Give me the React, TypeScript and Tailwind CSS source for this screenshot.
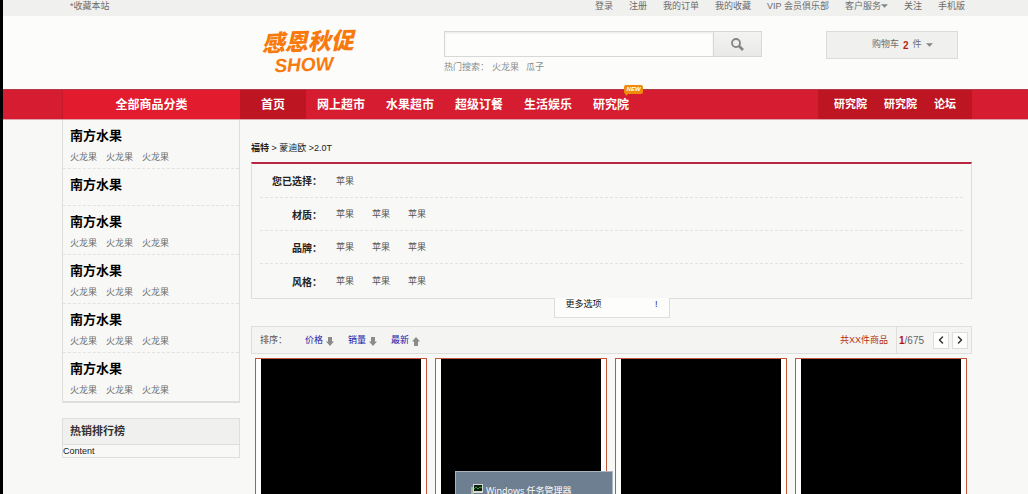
import { ChevronLeft, ChevronRight } from "lucide-react";
import clsx from "clsx";

const accountLinks = [
  { label: "登录" },
  { label: "注册" },
  { label: "我的订单" },
  { label: "我的收藏" },
  { label: "VIP 会员俱乐部" },
  { label: "客户服务", caret: true },
  { label: "关注" },
  { label: "手机版" },
];

const navigation = [
  { label: "网上超市" },
  { label: "水果超市" },
  { label: "超级订餐" },
  { label: "生活娱乐" },
  { label: "研究院", isNew: true },
];

const sideNavigation = ["研究院", "研究院", "论坛"];

const fruits = ["火龙果", "火龙果", "火龙果"];

const categories = [
  { title: "南方水果", items: fruits },
  { title: "南方水果", items: [] },
  { title: "南方水果", items: fruits },
  { title: "南方水果", items: fruits },
  { title: "南方水果", items: fruits },
  { title: "南方水果", items: fruits },
];

const filters = [
  { label: "您已选择：", options: ["苹果"] },
  { label: "材质：", options: ["苹果", "苹果", "苹果"] },
  { label: "品牌：", options: ["苹果", "苹果", "苹果"] },
  { label: "风格：", options: ["苹果", "苹果", "苹果"] },
];

const sortOptions = [
  { label: "价格", up: false },
  { label: "销量", up: false },
  { label: "最新", up: true },
];

const products = [1, 2, 3, 4];

// shared page column
const column = "mx-auto w-full max-w-[913px] pl-[3px]";

function Caret() {
  return (
    <svg viewBox="0 0 8 4" className="h-[4px] w-[7px]" fill="#858583">
      <path d="M0 0h8L4 4z" />
    </svg>
  );
}

function SearchIcon() {
  return (
    <svg viewBox="0 0 13 13" className="h-[13px] w-[13px]" fill="none" stroke="#858583">
      <circle cx="5" cy="5" r="4" strokeWidth="1.8" />
      <path d="M8 8l4 4" strokeWidth="2.6" />
    </svg>
  );
}

function SortArrow({ up }: { up: boolean }) {
  return (
    <svg viewBox="0 0 8 9" className={clsx("h-[9px] w-[8px]", up && "rotate-180")} fill="#8b8b89">
      <path d="M2 0h4v4.5h2L4 9 0 4.5h2z" />
    </svg>
  );
}

function TopBar() {
  return (
    <div className="h-[16px] overflow-hidden bg-[#f0f0ee] text-[#6c6c6a]">
      <div className={clsx(column, "flex justify-between leading-3")}>
        <a href="#" className="ml-2">*收藏本站</a>
        <nav className="mr-[7px] flex gap-4">
          {accountLinks.map((link) => (
            <a key={link.label} href="#" className="flex items-center">
              {link.label}
              {link.caret && <Caret />}
            </a>
          ))}
        </nav>
      </div>
    </div>
  );
}

function Header() {
  return (
    <header className="h-[73px] bg-[#fcfcfa]">
      <div className={clsx(column, "flex items-start pt-[15px]")}>
        <a
          href="#"
          className="ml-[200px] -mt-[2px] w-[94px] -rotate-2 whitespace-nowrap font-black italic text-[#f87a0c]"
        >
          <span className="block text-[23px] leading-[26px]">感恩秋促</span>
          <span className="block pl-3 text-[19px] leading-[20px]">SHOW</span>
        </a>

        <div className="ml-[88px] w-[318px]">
          <form className="flex h-[26px]">
            <input
              type="text"
              aria-label="搜索"
              className="min-w-0 flex-1 border border-[#d8d8d6] bg-[#fdfdfb] px-2 shadow-[inset_0_1px_2px_#e8e8e6] outline-none"
            />
            <button
              type="button"
              aria-label="搜索"
              className="flex w-[48px] items-center justify-center border border-l-0 border-[#d8d8d6] bg-linear-to-b from-[#f3f3f1] to-[#e9e9e7]"
            >
              <SearchIcon />
            </button>
          </form>
          <p className="mt-[4px] flex gap-[7px] leading-3 text-[#8c8c8a]">
            <span className="-mr-[4px]">热门搜索：</span>
            <a href="#">火龙果</a>
            <a href="#">瓜子</a>
          </p>
        </div>

        <button
          type="button"
          className="ml-auto mr-[14px] flex h-[28px] w-[132px] items-center gap-1 border border-[#dcdcda] bg-[#f0f0ee] pl-[45px] text-[#6c6c6a]"
        >
          购物车 <b className="text-[10px] text-[#b5250f]">2</b> 件
          <Caret />
        </button>
      </div>
    </header>
  );
}

function MainNav() {
  return (
    <div className="h-[31px] border-b border-t border-b-[#d9a5aa] border-t-[#b33a48] bg-[#d61c30]">
      <nav className={clsx(column, "flex h-full font-bold text-white")}>
        <a
          href="#"
          className="flex w-[178px] items-center justify-center border-l border-[#c81a2b] bg-[#e21b2e] text-[12px]"
        >
          全部商品分类
        </a>
        <a href="#" className="flex w-[66px] items-center justify-center bg-[#bd1622] text-[12px]">
          首页
        </a>
        <div className="ml-px flex gap-px text-[12px]">
          {navigation.map((item) => (
            <a key={item.label} href="#" className="relative flex items-center px-[10px]">
              {item.label}
              {item.isNew && (
                <span className="absolute -right-[4px] -top-[5px] h-[9px] w-[19px] rounded-[2px] bg-[#f08a0a] text-center text-[6px] italic leading-[9px]">
                  NEW
                  <svg viewBox="0 0 4 3" className="absolute left-[1px] top-[8px] h-[3px] w-[4px]" fill="#f08a0a">
                    <path d="M0 0h4L1 3z" />
                  </svg>
                </span>
              )}
            </a>
          ))}
        </div>
        <div className="ml-auto flex items-center gap-[17px] bg-[#bd1622] px-4 text-[11px]">
          {sideNavigation.map((label, i) => (
            <a key={i} href="#">{label}</a>
          ))}
        </div>
      </nav>
    </div>
  );
}

function Sidebar() {
  return (
    <aside className="w-[178px] shrink-0">
      <ul className="border border-t-0 border-b-2 border-[#dededc]">
        {categories.map((category, i) => (
          <li
            key={i}
            className="border-b border-dashed border-[#e2e2e0] px-[7px] pb-[3px] pt-2 last:border-b-0"
          >
            <a href="#" className="block text-[13px] font-bold leading-4 text-black">
              {category.title}
            </a>
            <div className="mt-[5px] flex min-h-[4px] gap-[9px] leading-4 text-[#6c6c6a]">
              {category.items.map((item, j) => (
                <a key={j} href="#">{item}</a>
              ))}
            </div>
          </li>
        ))}
      </ul>

      <section className="mt-[15px] border border-[#dededc]">
        <h2 className="border-b border-[#dededc] bg-[#f0f0ee] px-[7px] text-[11px] font-bold leading-[25px] text-[#333]">
          热销排行榜
        </h2>
        <p className="leading-3 text-[#222]">Content</p>
      </section>
    </aside>
  );
}

function FilterPanel() {
  return (
    <section className="relative border border-t-2 border-[#dededc] border-t-[#b5283f] px-2">
      <div>
        {filters.map((filter) => (
          <div
            key={filter.label}
            className="flex h-[33px] items-center border-b border-dashed border-[#e2e2e0] pt-[2px] first:h-[34px] last:h-[34px] last:border-b-0"
          >
            <b className="w-[62px] text-right text-[10px] text-[#222]">{filter.label}</b>
            <div className="ml-[14px] flex gap-[18px] text-[#555553]">
              {filter.options.map((option, i) => (
                <a key={i} href="#">{option}</a>
              ))}
            </div>
          </div>
        ))}
      </div>
      <button
        type="button"
        className="absolute left-1/2 top-full flex h-[20px] w-[116px] -translate-x-1/2 justify-between border border-t-0 border-[#dededc] bg-[#fdfdfb] px-[11px] leading-3 text-[#111]"
      >
        更多选项
        <span className="text-[#22228a]">!</span>
      </button>
    </section>
  );
}

function SortBar() {
  return (
    <div className="mt-[27px] flex h-[28px] items-stretch border border-[#dededc] bg-[#f4f4f2]">
      <div className="flex items-center pl-2 pt-[2px]">
        <span className="w-[45px] text-[#555]">排序：</span>
        <div className="flex gap-[14px] text-[#1414a8]">
          {sortOptions.map((option) => (
            <a key={option.label} href="#" className="flex items-center gap-[3px]">
              {option.label}
              <SortArrow up={option.up} />
            </a>
          ))}
        </div>
      </div>
      <div className="ml-auto flex items-center border-r border-[#dededc] pr-2 pt-[2px] text-[#b5300f]">
        共XX件商品
      </div>
      <div className="flex w-[74px] items-center gap-[3px] pl-[2px]">
        <span className="flex-1 text-[10px] text-[#666664]">
          <b className="text-[#b5100f]">1</b>/675
        </span>
        <button
          type="button"
          aria-label="上一页"
          className="flex h-[17px] w-4 items-center justify-center border border-[#dededc] bg-[#fdfdfb] text-[#333]"
        >
          <ChevronLeft className="h-3 w-3 shrink-0" strokeWidth={3} />
        </button>
        <button
          type="button"
          aria-label="下一页"
          className="mr-[3px] flex h-[17px] w-4 items-center justify-center border border-[#dededc] bg-[#fdfdfb] text-[#333]"
        >
          <ChevronRight className="h-3 w-3 shrink-0" strokeWidth={3} />
        </button>
      </div>
    </div>
  );
}

function ProductGrid() {
  return (
    <div className="mt-1 grid grid-cols-4 gap-2 pl-1 pr-[5px]">
      {products.map((id) => (
        <a key={id} href="#" className="block h-[220px] border border-[#c4563c] bg-[#fdfdfb] px-[5px]">
          <span className="block h-[200px] bg-black" />
        </a>
      ))}
    </div>
  );
}

function TaskPreview() {
  return (
    <div className="fixed bottom-0 left-[455px] flex h-[23px] w-[158px] items-end overflow-hidden border border-b-0 border-[#a9b6c2] bg-[#6f7f92] pl-[15px] text-white">
      <svg viewBox="0 0 12 10" className="mr-[3px] h-[10px] w-[12px] shrink-0">
        <path d="M0 3h3v7H0z" fill="#a8b59b" />
        <path d="M2 0h10v9H2z" fill="#d6d9d2" />
        <path d="M3 1h8v6H3z" fill="#0d1f12" />
        <path d="M3 5l2-2 2 2 2-2 2 1" fill="none" stroke="#2f9a3c" />
      </svg>
      <span className="-mb-[5px] whitespace-nowrap font-['Open_Sans','Noto_Sans_CJK_SC',sans-serif] leading-4">
        Windows 任务管理器
      </span>
    </div>
  );
}

export default function App() {
  return (
    <div className="h-screen overflow-hidden border-l-[3px] border-black bg-[#f8f8f6] font-['Liberation_Sans','Noto_Sans_CJK_SC',sans-serif] text-[9px]">
      <TopBar />
      <Header />
      <MainNav />
      <div className={clsx(column, "flex gap-[11px]")}>
        <Sidebar />
        <main className="min-w-0 flex-1">
          <p className="pb-[7px] pt-[22px] leading-[13px] text-[#222]">
            <a href="#" className="font-bold">福特</a> &gt; <a href="#">蒙迪欧</a> &gt;2.0T
          </p>
          <FilterPanel />
          <SortBar />
          <ProductGrid />
        </main>
      </div>
      <TaskPreview />
    </div>
  );
}
